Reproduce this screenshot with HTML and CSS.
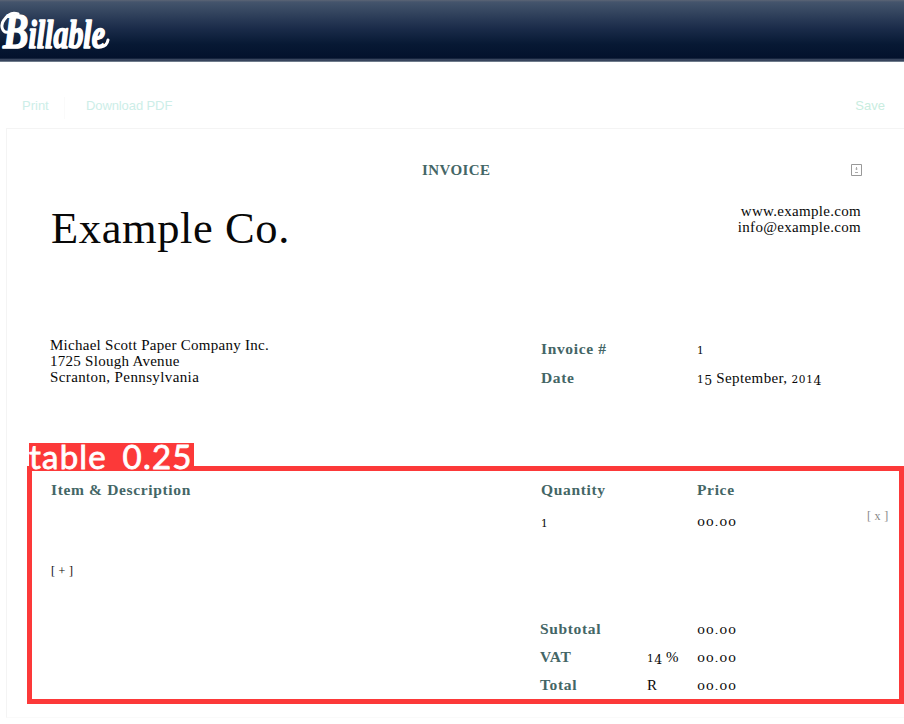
FILE: index.html
```html
<!DOCTYPE html>
<html lang="en">
<head>
<meta charset="utf-8">
<title>Billable</title>
<link rel="stylesheet" href="styles.css">
</head>
<body>
<header class="topbar">
  <svg class="logo" width="116" height="60" viewBox="0 0 116 60" role="img" aria-label="Billable">
    <text class="logo-text" x="3" y="48" textLength="102" lengthAdjust="spacingAndGlyphs"><tspan class="initial">B</tspan>illable</text>
    <path class="swash" d="M9 32C2 34 0 25 4 20C8 14 13 12 18 14M101 47Q107 46 108 40"/>
  </svg>
</header>
<nav class="toolbar">
  <a class="print">Print</a>
  <a class="download">Download PDF</a>
  <a class="save">Save</a>
</nav>
<main class="paper">
  <div class="heading">
    <h2 class="title">INVOICE</h2>
    <svg class="placeholder" width="12" height="13" viewBox="0 0 12 13"><path d="M.5.5h10v11H.5z" fill="#fff" stroke="#999"/><path d="M5.5 3v3M4.5 5h2M4 8.5h3" stroke="#aaa" fill="none"/></svg>
  </div>
  <section class="company">
    <h1>Example Co.</h1>
    <p class="contact">www.example.com<br>info@example.com</p>
  </section>
  <section class="details">
    <p class="client">Michael Scott Paper Company Inc.<br>1725 Slough Avenue<br><span class="city">Scranton, Pennsylvania</span></p>
    <dl class="meta">
      <dt>Invoice #</dt><dd><span class="num">1</span></dd>
      <dt>Date</dt><dd class="date"><span class="num">1<span class="low">5</span></span> September, <span class="num">201<span class="low">4</span></span></dd>
    </dl>
  </section>
  <section class="items">
    <div class="row labels"><b>Item &amp; Description</b><b>Quantity</b><b>Price</b></div>
    <div class="row item"><span></span><span class="num single">1</span><span class="num amount">00.00</span><a class="remove">[ x ]</a></div>
    <a class="add">[ + ]</a>
    <div class="totals">
      <b>Subtotal</b><span></span><span class="num amount">00.00</span>
      <b>VAT</b><span><span class="num">1<span class="low">4</span></span> %</span><span class="num amount">00.00</span>
      <b>Total</b><span>R</span><span class="num amount">00.00</span>
    </div>
    <div class="detection"><span class="tag">table 0.25</span></div>
  </section>
</main>
</body>
</html>
```
FILE: styles.css
```css
* { box-sizing: border-box; }
body { margin: 0; width: 904px; height: 724px; overflow: hidden; background: #fff; color: #080808; font: 15px/16px "Liberation Serif", serif; }
h1, h2, p, dl, dd { margin: 0; font-weight: normal; }
.topbar { height: 62px; background: linear-gradient(#5c6575 0, #44546c 2px, #34455f 12px, #1b2c4a 28px, #071934 44px, #03122d 58px, #4b5870 60px, #243047 61px, #b8c5cf 62px); }
.logo { display: block; overflow: visible; }
.logo-text { fill: #fff; stroke: #fff; stroke-width: 1.6; stroke-linejoin: round; font-family: "Liberation Serif", serif; font-size: 40px; font-style: italic; font-weight: bold; }
.initial { font-size: 51px; }
.swash { fill: none; stroke: #fff; stroke-width: 3; stroke-linecap: round; }
.toolbar { height: 66px; display: flex; align-items: flex-start; padding: 35px 19px 0 22px; font: 13px/17px "Liberation Sans", sans-serif; color: #cdeee8; }
.print { width: 43px; height: 22px; border-right: 1px solid #fafafa; }
.download { margin-left: 21px; letter-spacing: -.1px; }
.save { margin-left: auto; color: #c9eddf; }
.paper { margin-left: 6px; height: 590px; border: 1px solid #f4f4f4; border-right: 0; border-bottom-color: #fafafa; }
.heading { display: flex; height: 78px; padding: 33px 41px 0 414px; justify-content: space-between; }
.title, dt, b { color: #446666; font-weight: bold; font-size: 15.5px; letter-spacing: .65px; }
.title { font-size: 15px; letter-spacing: .4px; padding-left: 1px; }
.placeholder { margin-top: 2px; }
.company { display: flex; justify-content: space-between; padding: 0 43px 0 44px; height: 130px; }
.company h1 { margin-top: -2px; font-size: 44.5px; line-height: 46px; letter-spacing: .6px; }
.contact { text-align: right; margin-top: -4px; letter-spacing: .3px; }
.details { display: flex; height: 130px; padding-left: 43px; }
.client { width: 491px; letter-spacing: .27px; }
.city { letter-spacing: .38px; }
.meta { display: grid; grid-template-columns: 156px 1fr; grid-auto-rows: 29px; padding: 4px 0 0 0; }
.date { letter-spacing: .38px; }
.num { font-family: "DejaVu Serif", serif; font-size: 10.5px; letter-spacing: .6px; }
.low { position: relative; top: 2px; font-size: 12.5px; line-height: 1px; letter-spacing: 0; }
.amount { display: inline-block; justify-self: start; font-size: 10px; letter-spacing: .5px; padding-top: 2px; transform: scaleX(1.28); transform-origin: left; }
.single { padding-top: 2px; }
.items { position: relative; height: 250px; padding: 15px 0 0 44px; }
.row { display: grid; grid-template-columns: 490px 156px 170px 1fr; height: 31px; }
.remove { color: #888; font-size: 12px; margin-top: -5px; letter-spacing: .3px; }
.add { display: block; margin-top: 19px; height: 58px; font-size: 12px; letter-spacing: .3px; }
.totals { display: grid; grid-template-columns: 107px 50px 1fr; grid-auto-rows: 28px; margin-left: 489px; }
.detection { position: absolute; left: 20px; top: -1px; width: 877px; height: 238px; border: 5px solid #fc3939; }
.tag { position: absolute; left: -3px; top: -28px; width: 165px; height: 27px; background: #fc3939; color: #fff; font: 400 33px/26px Lato, sans-serif; -webkit-text-stroke: .8px #fff; letter-spacing: 1.2px; word-spacing: 6px; white-space: nowrap; }
```
